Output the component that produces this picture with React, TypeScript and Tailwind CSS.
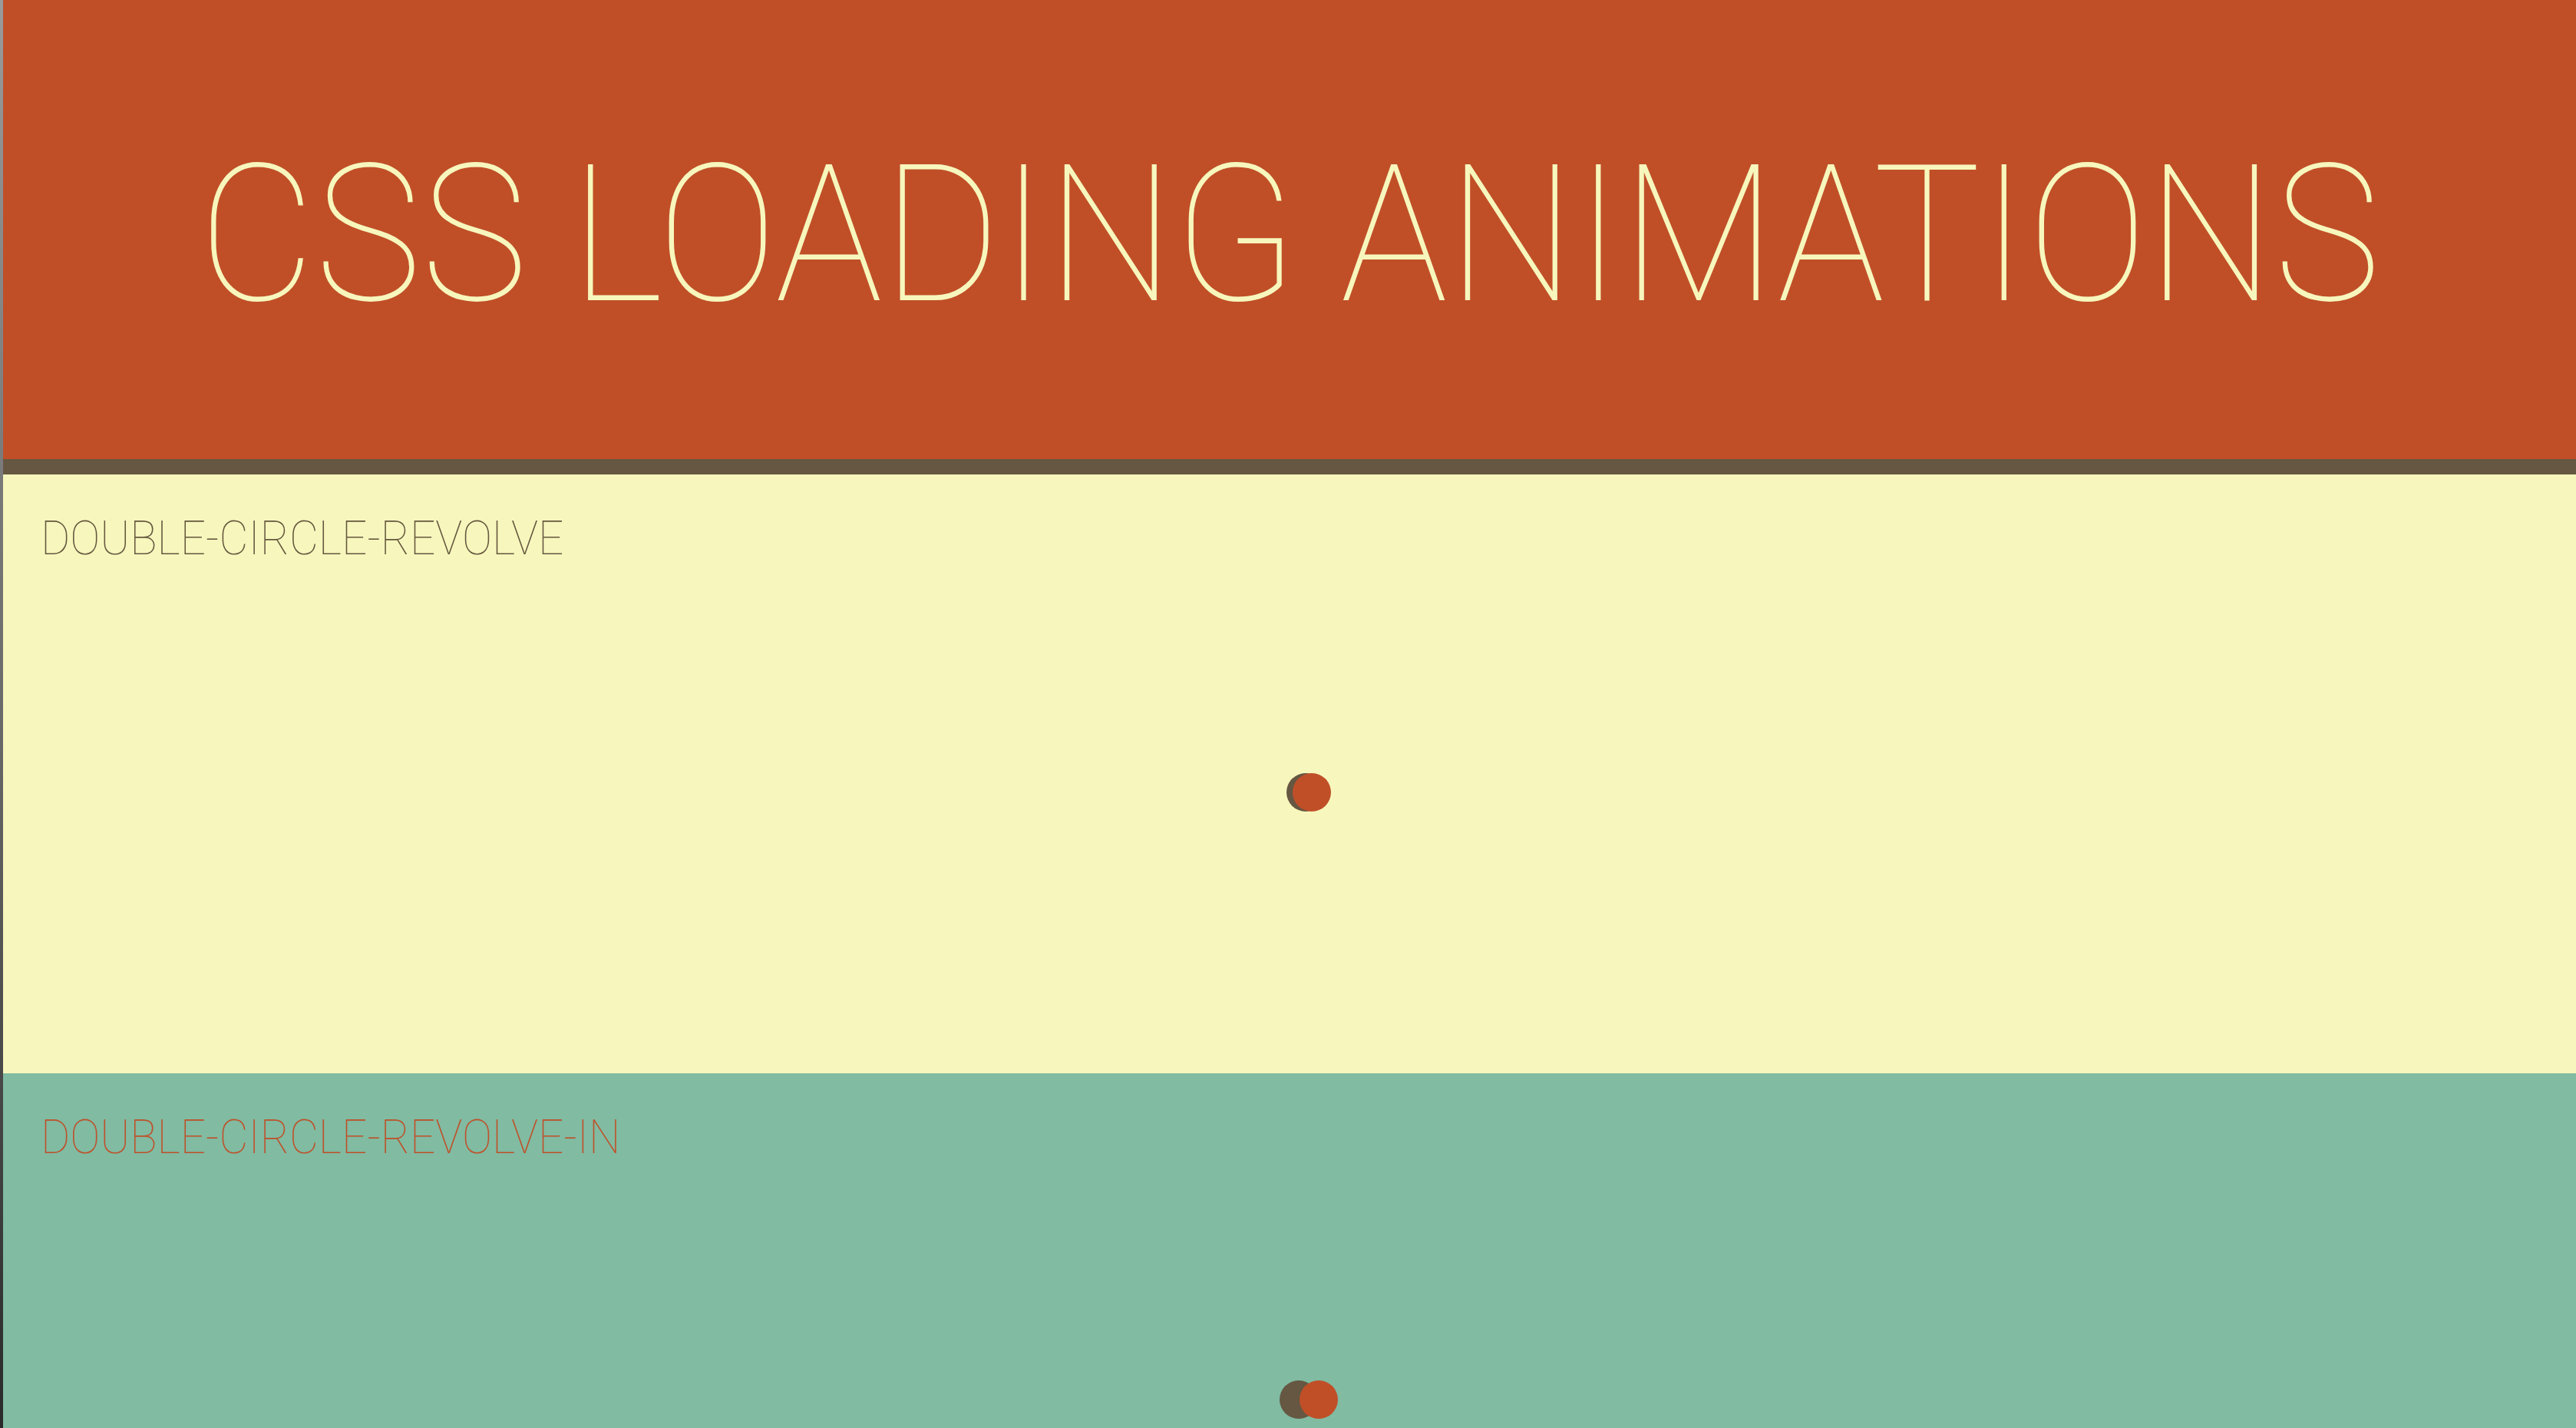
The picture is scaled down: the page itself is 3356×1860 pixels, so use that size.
import React from 'react';

const sections = [
  {
    name: 'DOUBLE-CIRCLE-REVOLVE',
    bg: 'bg-[#f7f7bd]',
    text: 'text-[#65573f]',
    offset: 'left-[8px]',
    pad: 'pt-[275px] pl-[68px]',
  },
  {
    name: 'DOUBLE-CIRCLE-REVOLVE-IN',
    bg: 'bg-[#80bba2]',
    text: 'text-[#c04f28]',
    offset: 'left-[26px]',
    pad: 'pt-[286px] pl-[50px]',
  },
];

const Loader: React.FC<{ offset: string }> = ({ offset }) => (
  <div className="relative w-[76px] h-[50px]">
    <div className="absolute left-0 top-0 w-[50px] h-[50px] rounded-full bg-[#655742]" />
    <div className={`absolute top-0 w-[50px] h-[50px] rounded-full bg-[#c04f28] ${offset}`} />
  </div>
);

export default function App() {
  return (
    <div className="flex h-[1860px] w-full overflow-hidden" style={{ fontFamily: 'Roboto, "Liberation Sans", sans-serif' }}>
      {/* desktop wallpaper edge */}
      <div className="w-[4px] shrink-0 bg-gradient-to-b from-[#9a9a9a] via-[#6a6a6a] to-[#2a2a2a]" />

      <main className="flex-1 flex flex-col">
        <header className="h-[598px] shrink-0 bg-[#c04f28] flex items-center justify-center">
          <h1 className="inline-block whitespace-nowrap text-[249px] leading-none font-thin text-[#f7f7bd] scale-x-[0.94] origin-center pt-[14px]">
            CSS LOADING ANIMATIONS
          </h1>
        </header>
        <div className="h-[20px] shrink-0 bg-[#655742]" />

        {sections.map((s) => (
          <section key={s.name} className={`h-[780px] shrink-0 flex flex-col ${s.bg}`}>
            <h2 className={`pl-[49px] pt-[52px] text-[62px] leading-none font-thin whitespace-nowrap ${s.text}`}>
              <span className="inline-block origin-left scale-x-[0.944]">{s.name}</span>
            </h2>
            <div className={`flex justify-center ${s.pad}`}>
              <Loader offset={s.offset} />
            </div>
          </section>
        ))}
      </main>
    </div>
  );
}
